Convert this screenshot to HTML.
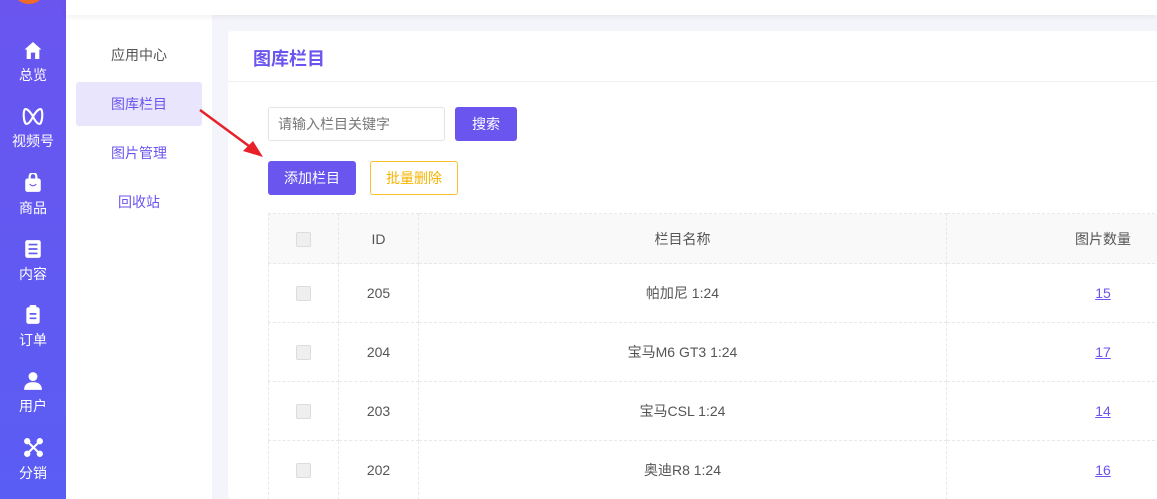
<!DOCTYPE html><html><head><meta charset="utf-8"><style>
*{margin:0;padding:0;box-sizing:border-box}
html,body{width:1157px;height:499px;overflow:hidden}
body{background:#f4f5fa;font-family:"Liberation Sans","Noto Sans CJK SC",sans-serif;position:relative;font-size:14px;color:#333}
.side{position:absolute;left:0;top:0;width:66px;height:499px;background:linear-gradient(#6a55ef,#5a5df4)}
.logo{position:absolute;left:14px;top:-22px;width:30px;height:26px;border-radius:50%;background:#f06a2a}
.it{position:absolute;left:0;width:66px;text-align:center;color:#fff;font-size:14px}
.it svg{display:block;margin:0 auto 5px}
.sub{position:absolute;left:66px;top:0;width:146px;height:499px;background:#fff}
.sub div{position:absolute;left:10px;width:126px;height:44px;line-height:44px;text-align:center;color:#6a55ef;font-size:14px;border-radius:3px}
.top{position:absolute;left:66px;top:0;width:1091px;height:15px;background:#fff;box-shadow:0 2px 6px rgba(0,0,0,.06)}
.card{position:absolute;left:228px;top:31px;width:940px;height:468px;background:#fff;border-radius:4px}
.card h1{position:absolute;left:25px;top:14px;font-size:18px;color:#6a55ef;font-weight:bold}
.hl{position:absolute;left:0;top:50px;width:100%;border-top:1px solid #eef0f4}
.abs{position:absolute}
.btn{position:absolute;border-radius:3px;text-align:center;font-size:14px}
table{position:absolute;left:268px;top:213px;border-collapse:collapse;width:992px;font-size:14px;color:#555}
td{border:1px dashed #e8e8e8;text-align:center;height:59px}
tr.h td{height:50px;background:#f9f9f9}
.cb{display:inline-block;width:15px;height:15px;border:1px solid #dcdcdc;background:#efefef;border-radius:2px;vertical-align:middle}
a{color:#6a55ef;text-decoration:underline}
</style></head><body>
<div class="side"><div class="logo"></div>
<div class="it" style="top:41px"><svg width="20" height="19" viewBox="0 0 18 18"><path d="M9 1L1 8h2v9h12V8h2z" fill="#fff"/><rect x="7" y="11" width="4" height="6" fill="#6a55ef"/></svg>总览</div>
<div class="it" style="top:107px"><svg width="22" height="19" viewBox="0 0 20 18"><path d="M3 2C0 2 1 16 4 16c3 0 6-7 6-7s3 7 6 7c3 0 4-14 1-14s-7 7-7 7S6 2 3 2z" fill="none" stroke="#fff" stroke-width="2"/></svg>视频号</div>
<div class="it" style="top:173px"><svg width="20" height="20" viewBox="0 0 18 18"><rect x="2" y="5" width="14" height="12" rx="2" fill="#fff"/><path d="M6 6V3a3 3 0 016 0v3" stroke="#fff" stroke-width="2" fill="none"/><path d="M6 10q3 3 6 0" stroke="#6a55ef" fill="none"/></svg>商品</div>
<div class="it" style="top:239px"><svg width="20" height="20" viewBox="0 0 18 18"><rect x="2" y="1" width="14" height="16" rx="2" fill="#fff"/><path d="M5 5h8M5 9h8M5 13h8" stroke="#5f5af2" stroke-width="1.5"/></svg>内容</div>
<div class="it" style="top:305px"><svg width="20" height="20" viewBox="0 0 18 18"><rect x="3" y="2" width="12" height="15" rx="2" fill="#fff"/><rect x="6" y="0" width="6" height="4" rx="1" fill="#fff"/><path d="M6 8h6M6 12h6" stroke="#5d5cf3" stroke-width="1.5"/></svg>订单</div>
<div class="it" style="top:371px"><svg width="20" height="20" viewBox="0 0 18 18"><circle cx="9" cy="5" r="4" fill="#fff"/><path d="M1 17q0-7 8-7t8 7z" fill="#fff"/></svg>用户</div>
<div class="it" style="top:437px"><svg width="21" height="21" viewBox="0 0 20 20"><path d="M4 4L16 16M16 4L4 16" stroke="#fff" stroke-width="2"/><circle cx="4" cy="4" r="3" fill="#fff"/><circle cx="16" cy="4" r="3" fill="#fff"/><circle cx="4" cy="16" r="3" fill="#fff"/><circle cx="16" cy="16" r="3" fill="#fff"/></svg>分销</div>
</div>
<div class="sub">
<div style="top:33px;color:#555">应用中心</div>
<div style="top:82px;background:#e8e5fc">图库栏目</div>
<div style="top:131px">图片管理</div>
<div style="top:180px">回收站</div>
</div>
<div class="top"></div>
<div class="card"><h1>图库栏目</h1><div class="hl"></div></div>
<div class="abs" style="left:268px;top:107px;width:177px;height:34px;border:1px solid #e4e4e4;border-radius:3px;line-height:32px;padding-left:9px;color:#777">请输入栏目关键字</div>
<div class="btn" style="left:455px;top:107px;width:62px;height:34px;line-height:34px;background:#6a55ef;color:#fff">搜索</div>
<div class="btn" style="left:268px;top:161px;width:88px;height:34px;line-height:34px;background:#6a55ef;color:#fff">添加栏目</div>
<div class="btn" style="left:370px;top:161px;width:88px;height:34px;line-height:32px;border:1px solid #fbc02d;color:#f5b400">批量删除</div>
<svg class="abs" style="left:195px;top:105px" width="75" height="55" viewBox="0 0 75 55"><path d="M5 5L58 44" stroke="#e8202a" stroke-width="2.5"/><path d="M68 52L48 46L58 36z" fill="#e8202a"/></svg>
<table>
<tr class="h"><td style="width:70px"><span class="cb"></span></td><td style="width:80px">ID</td><td style="width:528px">栏目名称</td><td>图片数量</td></tr>
<tr><td><span class="cb"></span></td><td>205</td><td>帕加尼 1:24</td><td><a>15</a></td></tr>
<tr><td><span class="cb"></span></td><td>204</td><td>宝马M6 GT3 1:24</td><td><a>17</a></td></tr>
<tr><td><span class="cb"></span></td><td>203</td><td>宝马CSL 1:24</td><td><a>14</a></td></tr>
<tr><td><span class="cb"></span></td><td>202</td><td>奥迪R8 1:24</td><td><a>16</a></td></tr>
</table>
</body></html>
